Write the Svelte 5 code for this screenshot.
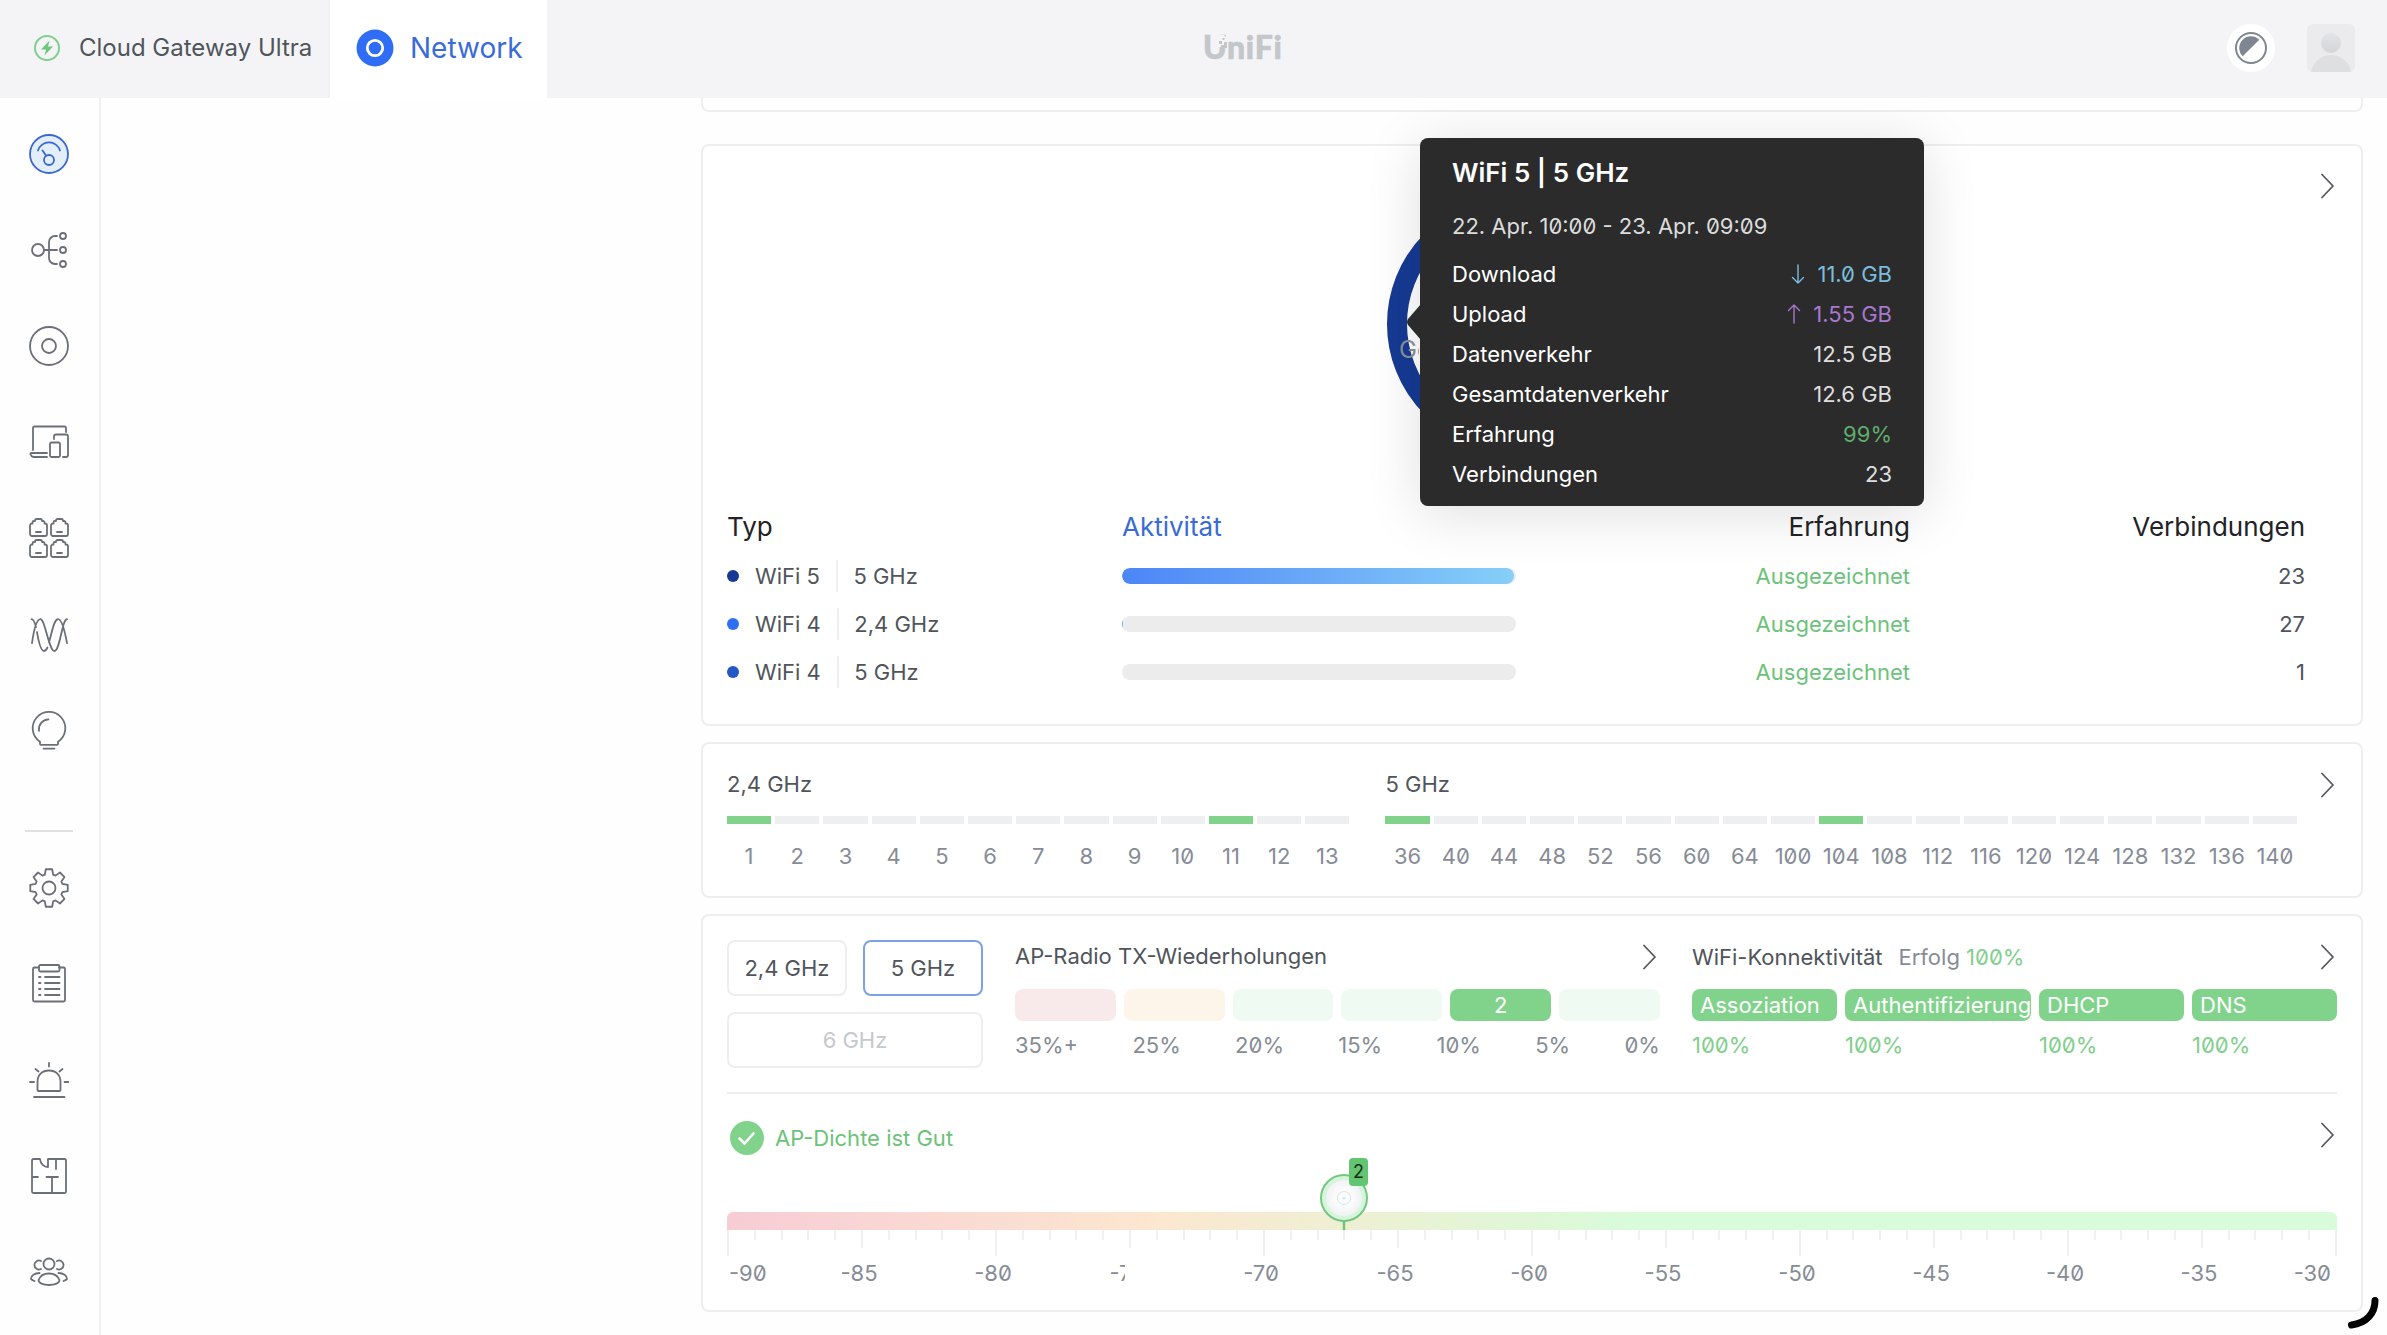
<script>
  const nav = ['dashboard', 'topology', 'device', 'clients', 'ports', 'radio', 'insight'];
  const tools = ['gear', 'logs', 'alarm', 'floor', 'users'];
  const tip = [
    ['Download', '11.0 GB', 'down'],
    ['Upload', '1.55 GB', 'up'],
    ['Datenverkehr', '12.5 GB', ''],
    ['Gesamtdatenverkehr', '12.6 GB', ''],
    ['Erfahrung', '99%', 'good'],
    ['Verbindungen', '23', '']
  ];
  const rows = [
    { type: 'WiFi 5', band: '5 GHz', dot: '#163a94', fill: 99.5, count: 23 },
    { type: 'WiFi 4', band: '2,4 GHz', dot: '#2f6ff2', fill: 0.2, count: 27 },
    { type: 'WiFi 4', band: '5 GHz', dot: '#2257c4', fill: 0, count: 1 }
  ];
  const bands = [
    { name: '2,4 GHz', used: [1, 11], list: Array.from({ length: 13 }, (_, i) => i + 1) },
    { name: '5 GHz', used: [36, 104], list: [36, 40, 44, 48, 52, 56, 60, 64, 100, 104, 108, 112, 116, 120, 124, 128, 132, 136, 140] }
  ];
  const retries = ['bad', 'warn', 'ok', 'ok', 'full', 'ok'];
  const retryLabels = ['35%+', '25%', '20%', '15%', '10%', '5%', '0%'];
  const steps = ['Assoziation', 'Authentifizierung', 'DHCP', 'DNS'];
  const ticks = Array.from({ length: 61 }, (_, i) => i - 90);
  const labels = Array.from({ length: 13 }, (_, i) => i * 5 - 90);
  const gear = (() => {
    const pts = [];
    for (let i = 0; i < 8; i++) {
      const a = (i * Math.PI) / 4 - Math.PI / 2;
      for (const [d, r] of [[-0.3, 14], [-0.17, 19], [0.17, 19], [0.3, 14]]) {
        pts.push(`${(20 + r * Math.cos(a + d)).toFixed(2)} ${(20 + r * Math.sin(a + d)).toFixed(2)}`);
      }
    }
    return 'M' + pts.join('L') + 'Z';
  })();
</script>

{#snippet chevron()}
  <svg class="chev" viewBox="0 0 16 28" width="16" height="28"><path d="M2 2.5 13 14 2 25.5" /></svg>
{/snippet}

{#snippet icon(name)}
  <svg class="icon" class:active={name === 'dashboard'} viewBox="0 0 40 40" width="40" height="40">
    {#if name === 'dashboard'}
      <circle cx="20" cy="20" r="19" fill="#e3eefc" />
      <path d="M9 16.500a11.500 11.500 0 0 1 22 0M13.500 16.500l3.500 5" /><circle cx="20" cy="26" r="5" />
    {:else if name === 'topology'}
      <circle cx="9" cy="20" r="6" /><circle cx="34" cy="6" r="3" /><circle cx="34" cy="20" r="3" /><circle cx="34" cy="34" r="3" />
      <path d="M15 20h13M28 6h-2a6 6 0 0 0-6 6v16a6 6 0 0 0 6 6h2" />
    {:else if name === 'device'}
      <circle cx="20" cy="20" r="19" /><circle cx="20" cy="20" r="7" />
    {:else if name === 'clients'}
      <path d="M4 28V6a1.500 1.500 0 0 1 1.500-1.500h30A1.500 1.500 0 0 1 37 6v4M18 31H2.500a1 1 0 0 0-1 1.500 4 4 0 0 0 3 2.500H18M25 17v-2.500a2 2 0 0 1 2-2h10a2 2 0 0 1 2 2V33a2 2 0 0 1-2 2h-3" />
      <rect x="21" y="20.500" width="10" height="14.500" rx="1.500" />
    {:else if name === 'ports'}
      {#each [[0, 0], [21, 0], [0, 21], [21, 21]] as [x, y]}
        <path transform={`translate(${x} ${y})`} d="M3 18a2 2 0 0 1-2-2V7.500a2 2 0 0 1 2-2h.500V4.500a1.500 1.500 0 0 1 1.500-1.500h1V2.500A1.500 1.500 0 0 1 7.500 1h4A1.500 1.500 0 0 1 13 2.500V3h1a1.500 1.500 0 0 1 1.500 1.500v1h.5a2 2 0 0 1 2 2V16a2 2 0 0 1-2 2zM7 14h5" />
      {/each}
    {:else if name === 'radio'}
      <path transform="translate(0 1.2)" d="M3 28C4.500 17 7 4 11.500 4S20 35.800 25.500 35.800 33 4 38 4M2.500 4C5 4 6 8 7 12M8 17c1.500 9 3.500 18.800 7 18.800 1.500 0 2.500-1.500 3.500-3.500M20 27c3-10 5-23 9-23s7 13 9 24" />
    {:else if name === 'insight'}
      <path transform="translate(0 1.3)" d="M11 32.500v-2A16.300 16.300 0 1 1 29 30.500v2a1 1 0 0 1-1 1H12a1 1 0 0 1-1-1zM14.500 37.300h11M10 19.500A10 10 0 0 1 19.500 8" />
    {:else if name === 'gear'}
      <path d={gear} /><circle cx="20" cy="20" r="6.500" />
    {:else if name === 'logs'}
      <path d="M10 3.500H5.500A1.500 1.500 0 0 0 4 5v31a1.500 1.500 0 0 0 1.500 1.500h29A1.500 1.500 0 0 0 36 36V5a1.500 1.500 0 0 0-1.500-1.500H30M10 13h1.500M16 13h14.500M10 19h1.500M16 19h14.500M10 25h1.500M16 25h14.500M10 31h1.500M16 31h14.500" />
      <rect x="10" y="1" width="20.500" height="6.500" rx="1.500" />
    {:else if name === 'alarm'}
      <path d="M5 37h30.500M20 3v3.500M1 22h4M35.500 22h4M6.500 9l3 2.500M33.500 9l-3 2.500M9.500 31a1 1 0 0 1-1-1v-8C8.500 15 13 10.500 20 10.500S31.500 15 31.500 22v8a1 1 0 0 1-1 1z" />
    {:else if name === 'floor'}
      <path d="M11 3H4.500A1.500 1.500 0 0 0 3 4.500v31A1.500 1.500 0 0 0 4.500 37h31a1.500 1.500 0 0 0 1.500-1.500v-31A1.500 1.500 0 0 0 35.500 3H19v8c-4 0-7.500-3-8-8zM27 3v10M3 21h6M17.500 21h11.500M23 21v16" />
    {:else}
      <circle cx="20" cy="12" r="5.500" />
      <path d="M12 9a4.500 4.500 0 1 0 0 8M28 9a4.500 4.500 0 1 1 0 8M9.500 28c2-5 5.500-6.500 10.500-6.500S28.500 23 30.500 28c0 3-4.500 5-10.500 5S9.500 31 9.500 28zM10.500 21C5.500 21 2 23.500 2 27c1 1 2 1.500 3.500 2M29.500 21c5 0 8.500 2.500 8.500 6-1 1-2 1.500-3.500 2" />
    {/if}
  </svg>
{/snippet}

<div class="app">
  <header>
    <div class="console">
      <svg viewBox="0 0 26 26" width="26" height="26">
        <circle cx="13" cy="13" r="12" fill="none" stroke="#82cf8d" stroke-width="2" />
        <path d="M15.500 5.500 7 14.500h5l-1.500 6L19 11.500h-5z" fill="#6fc67d" />
      </svg>
      <span>Cloud Gateway Ultra</span>
    </div>
    <div class="tab">
      <svg viewBox="0 0 38 38" width="38" height="38">
        <circle cx="19" cy="19" r="18.500" fill="#2f6df6" /><circle cx="19" cy="19" r="7.700" fill="none" stroke="#fff" stroke-width="2.800" />
      </svg>
      <span>Network</span>
    </div>
    <div class="logo">
      <span>UniFi</span>
      <svg viewBox="0 0 10 14" width="10" height="14">
        <rect width="10" height="12" fill="#f4f4f6" />
        <path d="M1 6h3v3H1zM4.500 3h2v2h-2zM6 7h3v3H6zM3 10h6v3H3zM6.500 0H8v1.500H6.500z" fill="#c3c6ca" />
      </svg>
    </div>
    <div class="account">
      <svg viewBox="0 0 48 48" width="48" height="48">
        <circle cx="24" cy="24" r="24" fill="#fff" /><circle cx="24" cy="24" r="15" fill="none" stroke="#80868f" stroke-width="2" />
        <path d="M15.700 32.300A11.700 11.700 0 0 1 32.300 15.700z" fill="#80868f" />
      </svg>
      <svg viewBox="0 0 48 48" width="48" height="48">
        <defs><linearGradient id="av" x1="0" y1="0" x2="0" y2="1"><stop offset="0" stop-color="#e2e3e5" /><stop offset="1" stop-color="#d3d5d8" /></linearGradient></defs>
        <rect width="48" height="48" rx="6" fill="#ebebed" /><circle cx="24" cy="19" r="10" fill="url(#av)" />
        <path d="M4 48c2-10 10-17 20-17s18 7 20 17z" fill="#dddfe1" />
      </svg>
    </div>
  </header>

  <div class="body">
    <nav>
      {#each nav as n}{@render icon(n)}{/each}
      <hr />
      {#each tools as n}{@render icon(n)}{/each}
    </nav>

    <main>
      <section class="card prev"></section>

      <section class="card usage">
        <div class="top">
          <div class="ring">
            <span class="caption">Ge</span>
            <div class="tooltip">
              <svg class="arrow" viewBox="0 0 15 36" width="15" height="36"><path d="M15 0 2 15q-2 3 0 6l13 15z" /></svg>
              <h3>WiFi 5 | 5 GHz</h3>
              <p>22. Apr. 10:00 - 23. Apr. 09:09</p>
              {#each tip as [k, v, c]}
                <div class="kv">
                  <span>{k}</span>
                  <b class={c}>
                    {#if c === 'down'}<svg viewBox="0 0 14 20" width="14" height="20"><path d="M7 1v18M1.500 13.500 7 19l5.500-5.500" /></svg>{/if}
                    {#if c === 'up'}<svg viewBox="0 0 14 20" width="14" height="20"><path d="M7 19V1M1.500 6.500 7 1l5.500 5.500" /></svg>{/if}
                    {v}
                  </b>
                </div>
              {/each}
            </div>
          </div>
          {@render chevron()}
        </div>
        <div class="grid head"><span>Typ</span><span class="sort">Aktivität</span><span class="r">Erfahrung</span><span class="r">Verbindungen</span></div>
        {#each rows as r}
          <div class="grid">
            <div class="type"><i style:background={r.dot}></i><span>{r.type}</span><em></em><span>{r.band}</span></div>
            <div class="track"><div class="fill" style:width={`${r.fill}%`}></div></div>
            <span class="r green">Ausgezeichnet</span>
            <span class="r">{r.count}</span>
          </div>
        {/each}
      </section>

      <section class="card channels">
        {#each bands as b}
          <div class="band" style:flex={`${b.list.length} 0 ${b.list.length * 4 - 4}px`}>
            <span>{b.name}</span>
            <div class="slots">
              {#each b.list as c}<div class="slot" class:used={b.used.includes(c)}><i></i><span>{c}</span></div>{/each}
            </div>
          </div>
        {/each}
        {@render chevron()}
      </section>

      <section class="card radio">
        <div class="upper">
          <div class="buttons">
            <button>2,4 GHz</button><button class="on">5 GHz</button><button class="off">6 GHz</button>
          </div>
          <div class="col">
            <div class="title"><span>AP-Radio TX-Wiederholungen</span>{@render chevron()}</div>
            <div class="blocks">{#each retries as r}<div class={r}>{r === 'full' ? 2 : ''}</div>{/each}</div>
            <div class="scale">{#each retryLabels as l}<span>{l}</span>{/each}</div>
          </div>
          <div class="col">
            <div class="title conn"><span>WiFi-Konnektivität</span><span class="muted">Erfolg <b>100%</b></span>{@render chevron()}</div>
            <div class="steps">
              {#each steps as s}<div class="step"><div>{s}</div><span>100%</span></div>{/each}
            </div>
          </div>
        </div>
        <div class="density">
          <svg viewBox="0 0 34 34" width="34" height="34"><circle cx="17" cy="17" r="17" fill="#81d38c" /><path d="M9.500 17.500l5 5 9-10" fill="none" stroke="#fff" stroke-width="2.600" stroke-linecap="round" stroke-linejoin="round" /></svg>
          <span>AP-Dichte ist Gut</span>
          {@render chevron()}
        </div>
        <div class="spectrum">
          <div class="marker">
            <svg viewBox="0 0 48 56" width="48" height="56">
              <defs><radialGradient id="ap"><stop offset="0.5" stop-color="#fbfbfc" /><stop offset="1" stop-color="#f1f2f5" /></radialGradient></defs>
              <path d="M24 47v9" stroke="#6cc67a" stroke-width="2.500" />
              <circle cx="24" cy="24" r="23" fill="#d5f5db" stroke="#74c681" stroke-width="2" />
              <circle cx="24" cy="24" r="18" fill="url(#ap)" />
              <circle cx="24" cy="24" r="6.500" fill="none" stroke="#dde3ea" stroke-width="1" /><circle cx="24" cy="24" r="1.500" fill="#dfe5ec" />
            </svg>
            <span>2</span>
          </div>
        </div>
        <div class="ticks">{#each ticks as t}<i class:five={t % 5 === 0} class:ten={t % 10 === 0}></i>{/each}</div>
        <div class="axis">{#each labels as l}<span class:cut={l === -75}>{l}</span>{/each}</div>
      </section>
    </main>
  </div>
  <svg class="stroke" viewBox="0 0 32 32" width="32" height="32"><path d="M28 3.500C28 16 20 26 4.500 28" /></svg>
</div>

<style>
  :global(body) { margin: 0; background: #fff; overflow: hidden; }
  .app { position: relative; width: 2387px; height: 1335px; overflow: hidden; display: flex; flex-direction: column; font: 22px/32px Inter, sans-serif; font-feature-settings: 'zero'; color: #50545b; background: #fefefe; }
  .app * { box-sizing: border-box; }
  svg { display: block; flex: none; }
  header { height: 98px; flex: none; display: flex; background: #f4f4f6; position: relative; z-index: 2; }
  .console { width: 330px; padding-left: 34px; display: flex; align-items: center; gap: 19px; border-right: 2px solid #efeff2; font-size: 24px; padding-bottom: 2px; white-space: nowrap; }
  .tab { width: 217px; background: #fff; padding: 0 0 2px 26px; display: flex; align-items: center; gap: 16px; font-size: 28px; color: #3a6bd8; }
  .logo { flex: 1; position: relative; padding: 31px 0 0 656px; font: 900 32px/32px Lato, sans-serif; letter-spacing: 0.7px; color: #c3c6ca; -webkit-text-stroke: 0.6px #c3c6ca; }
  .logo svg { position: absolute; left: 671px; top: 35px; }
  .account { display: flex; align-items: center; gap: 32px; padding: 0 32px 2px 0; }
  .body { flex: 1; min-height: 0; display: flex; }
  nav { width: 101px; border-right: 2px solid #eeeeef; padding: 36px 0 0 29px; display: flex; flex-direction: column; gap: 56px; }
  nav hr { width: 48px; height: 2px; border: 0; background: #dee0e3; margin: 24px 0 -20px -4px; flex: none; }
  .icon { fill: none; stroke: #6b6f77; stroke-width: 1.8; stroke-linecap: round; stroke-linejoin: round; }
  .icon.active { stroke: #3a68cf; }
  .chev { fill: none; stroke: #55585c; stroke-width: 1.8; stroke-linecap: round; stroke-linejoin: round; }
  main { flex: 1; padding: 0 24px 0 600px; display: flex; flex-direction: column; gap: 16px; }
  .card { border: 2px solid #eeeeef; border-radius: 8px; background: #fff; flex: none; }
  .prev { height: 14px; border-top: 0; border-radius: 0 0 8px 8px; margin-bottom: 16px; }
  .usage { height: 582px; padding: 0 56px 0 24px; }
  .top { height: 357px; display: flex; padding: 50px 0 0 660px; }
  .top .chev { margin: -24px -31px 0 auto; }
  .ring { position: relative; width: 256px; height: 256px; border: 20px solid #163a94; border-radius: 50%; padding-top: 118px; }
  .caption { display: block; width: 20px; margin-left: -8px; overflow: hidden; color: #8a9099; font-size: 24px; }
  .tooltip { position: absolute; left: 13px; top: -78px; width: 504px; height: 368px; background: #2b2b2b; border-radius: 8px; padding: 17px 32px; color: #fff; font-size: 22px; box-shadow: 0 8px 56px rgba(0, 0, 0, 0.13); z-index: 1; }
  .tooltip .arrow { position: absolute; left: -14px; top: 166px; fill: #2b2b2b; }
  h3 { font-size: 26px; line-height: 36px; font-weight: 600; margin: 0; }
  .tooltip p { margin: 19px 0 12px; color: #dcdcdd; line-height: 32px; }
  .kv { display: flex; justify-content: space-between; height: 40px; line-height: 40px; }
  .kv b { font-weight: 400; color: #dededf; display: flex; align-items: center; gap: 12px; }
  .kv svg { fill: none; stroke: currentColor; stroke-width: 1.400; stroke-linecap: round; stroke-linejoin: round; }
  .kv .down { color: #7bbddd; }
  .kv .up { color: #a878cf; }
  .kv .good { color: #5fae6b; }
  .grid { display: grid; grid-template-columns: 395px 394px 394px 395px; height: 48px; align-items: center; }
  .head { height: 49px; padding-bottom: 1px; font-size: 26px; color: #212327; }
  .sort { color: #3a6bd8; }
  .r { text-align: right; }
  .green { color: #6cc279; }
  .type { display: flex; align-items: center; }
  .type i { width: 12px; height: 12px; border-radius: 50%; margin-right: 16px; }
  .type em { width: 2px; height: 32px; background: #eeeeef; margin: 0 15.500px 0 16px; }
  .track { height: 16px; border-radius: 8px; background: #ececed; overflow: hidden; }
  .fill { height: 16px; border-radius: 8px; background: linear-gradient(90deg, #4b86f6, #86cff8); }
  .channels { height: 156px; padding: 24px 24px 0; display: flex; gap: 36px; }
  .channels .chev { margin: 3px 1px 0 -13px; }
  .slots { display: flex; gap: 4px; margin-top: 16px; }
  .slot { flex: 1 0 0; min-width: 0; display: flex; flex-direction: column; align-items: center; color: #868c96; }
  .slot i { width: 100%; height: 8px; background: #eeeff1; margin-bottom: 16px; }
  .slot.used i { background: #81d38c; }
  .radio { height: 398px; padding: 24px 24px 0; }
  .upper { display: flex; gap: 32px; height: 154px; border-bottom: 2px solid #eeeeef; }
  .buttons { width: 256px; display: grid; grid-template-columns: 120px 120px; gap: 16px; grid-auto-rows: 56px; }
  button { font: inherit; font-feature-settings: inherit; color: inherit; padding: 0; background: #fff; border: 2px solid #eeeeef; border-radius: 8px; }
  .on { border-color: #7ba2e6; }
  .off { grid-column: span 2; color: #c5c8cc; }
  .col { width: 645px; }
  .title { height: 49px; display: flex; }
  .conn > span { padding-top: 1px; }
  .title .chev { margin: 3px 2px 0 auto; }
  .conn .chev { margin-right: 1px; }
  .muted { color: #868c96; margin-left: 16px; }
  .muted b { font-weight: 400; color: #81cf8c; }
  .blocks { display: flex; gap: 8px; }
  .blocks div { flex: 1; height: 32px; border-radius: 8px; text-align: center; color: #fff; }
  .bad { background: #f8e9eb; }
  .warn { background: #fdf5ea; }
  .ok { background: #effaf2; }
  .blocks .full, .step div { background: #81d38c; }
  .scale { display: flex; justify-content: space-between; margin-top: 8px; color: #868c96; }
  .steps { display: grid; grid-template-columns: 145px 186px 145px 145px; gap: 8px; }
  .step div { height: 32px; border-radius: 8px; color: #fff; padding-left: 8px; margin-bottom: 8px; overflow: hidden; }
  .step span { color: #81cf8c; }
  .density { height: 118px; display: flex; align-items: flex-start; padding: 27px 0 0 3px; color: #6cc279; gap: 11px; }
  .density span { padding-top: 1px; }
  .density .chev { margin: 0 1px 0 auto; }
  .spectrum { height: 18px; border-radius: 6px 6px 0 0; background: linear-gradient(90deg, #f7ccd5, #fce7d0 27%, #d8fbd9 56%, #d8fbd9); position: relative; }
  .marker { position: absolute; left: 592.500px; top: -38px; }
  .marker span { position: absolute; left: 29.500px; top: -16px; width: 19px; height: 28px; border-radius: 4px; background: #63c571; color: #16301a; font-size: 18px; line-height: 28px; text-align: center; }
  .ticks { display: flex; justify-content: space-between; height: 28px; }
  .ticks i { width: 2px; height: 10px; background: #eff0f1; }
  .ticks .five { height: 18px; }
  .ticks .ten { height: 26px; }
  .axis { display: flex; margin-top: -1px; color: #868c96; }
  .axis span { width: 134px; text-align: center; }
  .axis span:first-child { width: 65px; text-align: left; padding-left: 2px; }
  .axis span:last-child { width: 71px; text-align: right; padding-right: 6px; }
  .axis .cut { clip-path: inset(0 69px 0 0); }
  .stroke { position: absolute; left: 2347px; top: 1297px; fill: none; stroke: #000; stroke-width: 7; stroke-linecap: round; }
</style>
